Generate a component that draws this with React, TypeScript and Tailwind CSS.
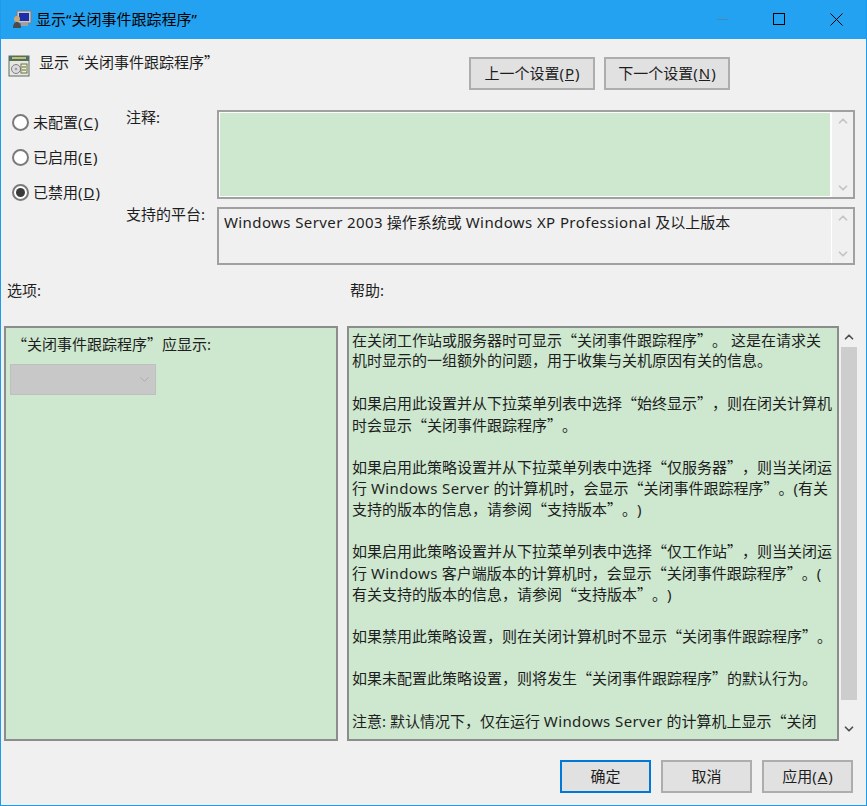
import { ChevronUp, ChevronDown } from 'lucide-react'

const font = 'font-["Noto_Sans","Noto_Sans_CJK_SC",sans-serif]'

const helpLines = [
  '在关闭工作站或服务器时可显示“关闭事件跟踪程序”。 这是在请求关',
  '机时显示的一组额外的问题，用于收集与关机原因有关的信息。',
  '',
  '如果启用此设置并从下拉菜单列表中选择“始终显示”，则在闭关计算机',
  '时会显示“关闭事件跟踪程序”。',
  '',
  '如果启用此策略设置并从下拉菜单列表中选择“仅服务器”，则当关闭运',
  '行 Windows Server 的计算机时，会显示“关闭事件跟踪程序”。(有关',
  '支持的版本的信息，请参阅“支持版本”。)',
  '',
  '如果启用此策略设置并从下拉菜单列表中选择“仅工作站”，则当关闭运',
  '行 Windows 客户端版本的计算机时，会显示“关闭事件跟踪程序”。(',
  '有关支持的版本的信息，请参阅“支持版本”。)',
  '',
  '如果禁用此策略设置，则在关闭计算机时不显示“关闭事件跟踪程序”。',
  '',
  '如果未配置此策略设置，则将发生“关闭事件跟踪程序”的默认行为。',
  '',
  '注意: 默认情况下，仅在运行 Windows Server 的计算机上显示“关闭',
]

// quotes are full width in the dialog, latin runs a bit wider than Noto Sans
function Rich({ text }: { text: string }) {
  const parts = text.split(/([“”]|[A-Za-z0-9][A-Za-z0-9 ]*[A-Za-z0-9])/)
  return (
    <>
      {parts.map((p, i) =>
        p === '“' || p === '”' ? (
          <span key={i} className='font-["Noto_Sans_CJK_SC",sans-serif]'>{p}</span>
        ) : /^[A-Za-z0-9]/.test(p) ? (
          <span key={i} className="tracking-[0.4px]">{p}</span>
        ) : (
          <span key={i}>{p}</span>
        ),
      )}
    </>
  )
}

function Radio({ label, hotkey, checked }: { label: string; hotkey: string; checked?: boolean }) {
  return (
    <div className="flex items-center h-[35px]">
      <span className="w-[17px] h-[17px] rounded-full border-2 border-[#7a7a7a] bg-white flex items-center justify-center">
        {checked && <span className="w-[9px] h-[9px] rounded-full bg-[#3a3a3a]" />}
      </span>
      <span className="ml-[4px] text-[15px]">
        {label}(<span className="underline mx-[1px]">{hotkey}</span>)
      </span>
    </div>
  )
}

function Btn({ children, className = 'border-[#adadad]' }: { children: React.ReactNode; className?: string }) {
  return (
    <div className={`w-[91px] h-[33px] flex items-center justify-center bg-[#e1e1e1] border-2 text-[15px] ${className}`}>
      {children}
    </div>
  )
}

function PolicyIcon() {
  return (
    <svg width="22" height="22" viewBox="0 0 22 22">
      <rect x="1" y="1" width="20" height="20" fill="#e8e8d8" stroke="#5a6a6a" />
      <rect x="1" y="1" width="20" height="5" fill="#4f6f6a" />
      <rect x="4" y="2" width="14" height="2" fill="#c8c060" />
      <circle cx="8" cy="14" r="4.5" fill="#d8d8f0" stroke="#808080" />
      <circle cx="8" cy="14" r="1.3" fill="#c0a040" />
      <rect x="13" y="9" width="6" height="9" fill="#f4f0c0" stroke="#607060" />
      <path d="M14 12h4M14 15h4" stroke="#506050" />
    </svg>
  )
}

function TitleIcon() {
  return (
    <svg width="20" height="20" viewBox="0 0 20 20">
      <rect x="5" y="1" width="14" height="12" fill="#c8c8c8" stroke="#808080" />
      <rect x="7" y="3" width="10" height="8" fill="#1c2fa8" />
      <rect x="9" y="13" width="7" height="3" fill="#a0a0a0" />
      <circle cx="5" cy="9" r="3" fill="#c8a878" />
      <path d="M1 18c0-4 2-6 4-6s4 2 4 6z" fill="#4a4a4a" />
    </svg>
  )
}

function Scroll() {
  return (
    <div className="w-[22px] flex flex-col justify-between items-center py-[2px] border-l border-white">
      <ChevronUp size={14} strokeWidth={3} className="text-[#c4c4c4]" />
      <ChevronDown size={14} strokeWidth={3} className="text-[#c4c4c4]" />
    </div>
  )
}

export default function App() {
  return (
    <div className={`w-[867px] h-[806px] flex flex-col bg-[#f0f0f0] border border-[#1b9bf0] border-t-0 text-[#1e1e1e] overflow-hidden [text-spacing-trim:space-all] ${font}`}>
      <div className="h-[39px] shrink-0 bg-[#23a2f2] flex items-center pl-[11px] text-black">
        <TitleIcon />
        <span className="ml-[4px] text-[15px]">显示“关闭事件跟踪程序”</span>
        <div className="ml-auto flex items-center pr-[23px] gap-[44px]">
          <svg width="13" height="13" viewBox="0 0 13 13"><path d="M0.5 6.5h12" stroke="#4a86b0" /></svg>
          <svg width="13" height="13" viewBox="0 0 13 13"><rect x="0.5" y="0.5" width="11" height="11" fill="none" stroke="#000" /></svg>
          <svg width="13" height="13" viewBox="0 0 13 13"><path d="M0.5 0.5l12 12M12.5 0.5l-12 12" stroke="#000" /></svg>
        </div>
      </div>

      <div className="flex h-[71px] shrink-0">
        <div className="ml-[7px] mt-[16px]"><PolicyIcon /></div>
        <span className="ml-[9px] mt-[12px] text-[15px] h-[22px]"><Rich text="显示“关闭事件跟踪程序”" /></span>
        <div className="ml-auto mr-[136px] mt-[18px] flex gap-[9px]">
          <Btn className="border-[#adadad] w-[126px]">上一个设置(<span className="underline mx-[1px]">P</span>)</Btn>
          <Btn className="border-[#adadad] w-[126px]">下一个设置(<span className="underline mx-[1px]">N</span>)</Btn>
        </div>
      </div>

      <div className="flex h-[155px] shrink-0">
        <div className="w-[125px] pl-[11px] shrink-0 -mt-[5px]">
          <Radio label="未配置" hotkey="C" />
          <Radio label="已启用" hotkey="E" />
          <Radio label="已禁用" hotkey="D" checked />
        </div>
        <div className="w-[91px] shrink-0 text-[15px]">
          <div className="h-[93px] leading-[14px]">注释:</div>
          <div className="leading-[22px]">支持的平台:</div>
        </div>
        <div className="flex-1 flex flex-col gap-[8px] pr-[11px]">
          <div className="h-[89px] border-2 border-[#a0a0a0] flex">
            <div className="flex-1 bg-[#cde8cf] border border-white" />
            <Scroll />
          </div>
          <div className="h-[58px] border-2 border-[#a0a0a0] flex">
            <div className="flex-1 pl-[5px] text-[15px] leading-[24px] pt-[1px]">
              <Rich text="Windows Server 2003 操作系统或 Windows XP Professional 及以上版本" />
            </div>
            <Scroll />
          </div>
        </div>
      </div>

      <div className="flex h-[61px] shrink-0 text-[15px] pt-[14px]">
        <span className="ml-[6px] w-[343px]">选项:</span>
        <span>帮助:</span>
      </div>

      <div className="flex h-[415px] shrink-0 pl-[3px]">
        <div className="w-[334px] border-2 border-[#8c8c8c] bg-[#cde8cf] shrink-0">
          <div className="pl-[6px] pt-[5px] text-[15px] leading-[22px]"><Rich text="“关闭事件跟踪程序”应显示:" /></div>
          <div className="ml-[4px] mt-[9px] w-[146px] h-[31px] bg-[#c8c8c8] border border-[#bfbfbf] flex items-center justify-end pr-[3px]">
            <ChevronDown size={15} strokeWidth={1.4} className="text-[#a8a8a8]" />
          </div>
        </div>
        <div className="ml-[9px] w-[492px] border-2 border-[#8c8c8c] bg-[#cde8cf] shrink-0 overflow-hidden pl-[3px] pt-[1px] text-[15px] leading-[21.15px] whitespace-nowrap">
          {helpLines.map((line, i) => (
            <div key={i} className="h-[21.15px]"><Rich text={line} /></div>
          ))}
        </div>
        <div className="w-[16px] ml-[2px] flex flex-col items-center">
          <div className="h-[21px] flex items-center"><ChevronUp size={14} strokeWidth={3} className="text-[#505050]" /></div>
          <div className="h-[353px] w-full bg-[#cdcdcd]" />
          <div className="pt-[22px]"><ChevronDown size={14} strokeWidth={3} className="text-[#505050]" /></div>
        </div>
      </div>

      <div className="flex justify-end pt-[19px] pr-[13px] gap-[10px]">
        <Btn className="border-[#0078d7]">确定</Btn>
        <Btn>取消</Btn>
        <Btn>应用(<span className="underline mx-[1px]">A</span>)</Btn>
      </div>
    </div>
  )
}
